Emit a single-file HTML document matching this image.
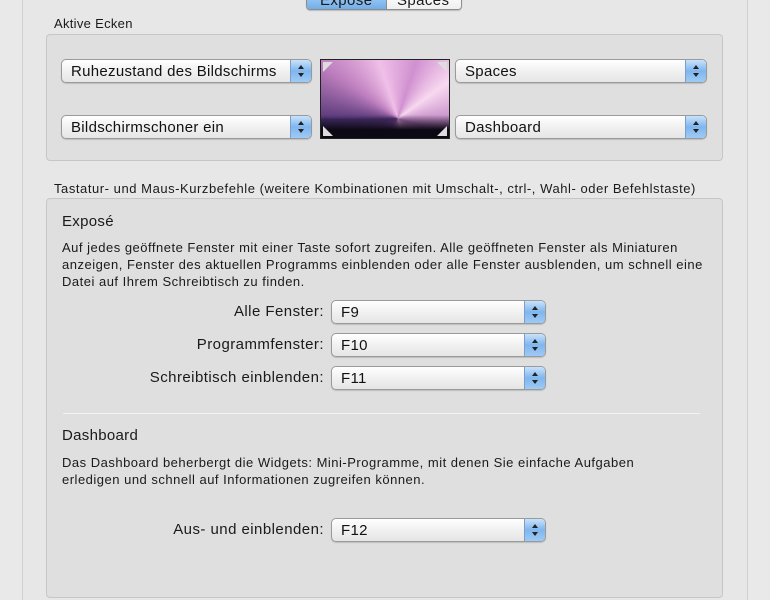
<!DOCTYPE html>
<html><head><meta charset="utf-8"><style>
*{margin:0;padding:0;box-sizing:border-box}
body{width:770px;height:578px;overflow:hidden;background:#e9e9e9;font-family:"Liberation Sans",sans-serif;color:#1a1a1a;position:relative}
.abs{position:absolute;white-space:nowrap}
.pane{position:absolute;left:22px;top:0;width:726px;height:600px;border-left:1px solid #d0d0d0;border-right:1px solid #d0d0d0;background:#e7e7e7}
.box{position:absolute;background:#dfdfdf;border:1px solid #c6c6c6;border-radius:4px}
.pop{position:absolute;height:24px;border:1px solid #9a9a9a;border-radius:5px;background:linear-gradient(#ffffff,#f1f1f1 50%,#e6e6e6);box-shadow:0 1px 1px rgba(0,0,0,.15);font-size:15px;letter-spacing:0.3px;line-height:23px;padding-left:9px;color:#111}
.pop .ar{position:absolute;right:0;top:0;width:21px;height:22px;border-radius:0 4px 4px 0;background:linear-gradient(#c8e2fb,#7fb6ee 50%,#9fcaf5);border-left:1px solid #7a9fc8}
.pop .ar:before{content:"";position:absolute;left:7px;top:5px;border:3px solid transparent;border-bottom:4px solid #222;border-top:0}
.pop .ar:after{content:"";position:absolute;left:7px;top:13px;border:3px solid transparent;border-top:4px solid #222;border-bottom:0}
.lbl{position:absolute;font-size:15px;letter-spacing:0.45px;text-align:right;white-space:nowrap}
.t{font-size:13px;letter-spacing:0.5px;color:#1a1a1a}
</style></head><body>
<div class="pane"></div>
<div class="abs" style="left:306px;top:-8px;width:156px;height:18px;border:1px solid #8d8d8d;border-radius:4px;overflow:hidden;box-shadow:0 1px 1px rgba(0,0,0,.2)">
<div style="position:absolute;left:0;top:0;width:79px;height:18px;background:linear-gradient(#a9d0f5,#6aaae8)"></div>
<div style="position:absolute;left:79px;top:0;width:77px;height:18px;background:linear-gradient(#fff,#ececec);border-left:1px solid #8d8d8d"></div>
<span style="position:absolute;left:13px;top:-1px;font-size:15px;letter-spacing:.4px">Exposé</span>
<span style="position:absolute;left:90px;top:-1px;font-size:15px;letter-spacing:.4px">Spaces</span>
</div>
<div class="abs" style="left:54px;top:16px;font-size:13px;letter-spacing:.3px">Aktive Ecken</div>
<div class="box" style="left:46px;top:34px;width:677px;height:127px"></div>
<div class="pop" style="left:61px;top:59px;width:251px">Ruhezustand des Bildschirms<div class="ar"></div></div>
<div class="pop" style="left:61px;top:115px;width:251px">Bildschirmschoner ein<div class="ar"></div></div>
<div class="pop" style="left:455px;top:59px;width:252px">Spaces<div class="ar"></div></div>
<div class="pop" style="left:455px;top:115px;width:252px">Dashboard<div class="ar"></div></div>
<div class="abs" style="left:320px;top:59px;width:130px;height:80px;border:1px solid #222;background:conic-gradient(from 270deg at 60% 75%,#5a3a7a,#c080c0 10%,#f0c0e8 20%,#d090d0 30%,#f8d8f0 40%,#b070b8 55%,#e0a0d8 70%,#8050a0 85%,#4a3070);overflow:hidden">
<div style="position:absolute;left:0;top:55px;width:130px;height:27px;background:linear-gradient(rgba(20,10,30,0),#0c0814 55%)"></div>
<div style="position:absolute;left:2px;top:2px;border-top:10px solid #ddd;border-right:10px solid transparent"></div>
<div style="position:absolute;right:2px;top:2px;border-top:10px solid #ddd;border-left:10px solid transparent"></div>
<div style="position:absolute;left:2px;bottom:2px;border-bottom:10px solid #ddd;border-right:10px solid transparent"></div>
<div style="position:absolute;right:2px;bottom:2px;border-bottom:10px solid #ddd;border-left:10px solid transparent"></div>
</div>
<div class="abs t" style="left:54px;top:181px;letter-spacing:0.55px">Tastatur- und Maus-Kurzbefehle (weitere Kombinationen mit Umschalt-, ctrl-, Wahl- oder Befehlstaste)</div>
<div class="box" style="left:46px;top:198px;width:677px;height:400px"></div>
<div class="abs" style="left:62px;top:213px;font-size:15px;letter-spacing:.3px">Exposé</div>
<div class="abs t" style="left:62px;top:239px;line-height:17px">Auf jedes geöffnete Fenster mit einer Taste sofort zugreifen. Alle geöffneten Fenster als Miniaturen<br>anzeigen, Fenster des aktuellen Programms einblenden oder alle Fenster ausblenden, um schnell eine<br>Datei auf Ihrem Schreibtisch zu finden.</div>
<div class="lbl" style="right:446px;top:303px">Alle Fenster:</div>
<div class="lbl" style="right:446px;top:336px">Programmfenster:</div>
<div class="lbl" style="right:446px;top:369px">Schreibtisch einblenden:</div>
<div class="pop" style="left:331px;top:300px;width:215px">F9<div class="ar"></div></div>
<div class="pop" style="left:331px;top:333px;width:215px">F10<div class="ar"></div></div>
<div class="pop" style="left:331px;top:366px;width:215px">F11<div class="ar"></div></div>
<div class="abs" style="left:63px;top:413px;width:637px;height:1px;background:#b9b9b9;border-bottom:1px solid #f2f2f2"></div>
<div class="abs" style="left:62px;top:427px;font-size:15px;letter-spacing:.3px">Dashboard</div>
<div class="abs t" style="left:62px;top:454px;line-height:17px">Das Dashboard beherbergt die Widgets: Mini-Programme, mit denen Sie einfache Aufgaben<br>erledigen und schnell auf Informationen zugreifen können.</div>
<div class="lbl" style="right:446px;top:521px">Aus- und einblenden:</div>
<div class="pop" style="left:331px;top:518px;width:215px">F12<div class="ar"></div></div>
</body></html>
